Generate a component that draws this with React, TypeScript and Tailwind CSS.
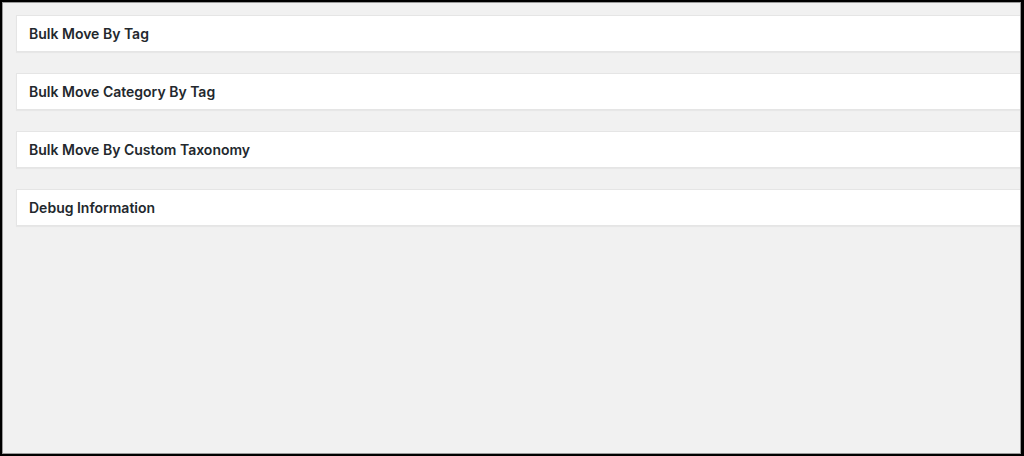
import React from "react";

const items = [
  "Bulk Move By Tag",
  "Bulk Move Category By Tag",
  "Bulk Move By Custom Taxonomy",
  "Debug Information",
];

export default function App() {
  return (
    <div className="w-[1024px] h-[456px] bg-black pl-[2px] pt-[2px] pr-[3px] pb-[2px]">
      <div className="w-full h-full bg-[#f1f1f1] border border-[#9a9a9a] overflow-hidden pl-[13px] pt-[12px] flex flex-col gap-[21px]">
        {items.map((t) => (
          <div
            key={t}
            className="bg-white border border-r-0 border-[#e5e5e5] shadow-[0_1px_1px_rgba(0,0,0,0.04)] h-[37px] flex items-center px-[12px]"
          >
            <h2
              className="text-[14px] font-semibold text-[#23282d] leading-[19.6px]"
              style={{ fontFamily: 'Inter, "Noto Sans", sans-serif' }}
            >
              {t}
            </h2>
          </div>
        ))}
      </div>
    </div>
  );
}
